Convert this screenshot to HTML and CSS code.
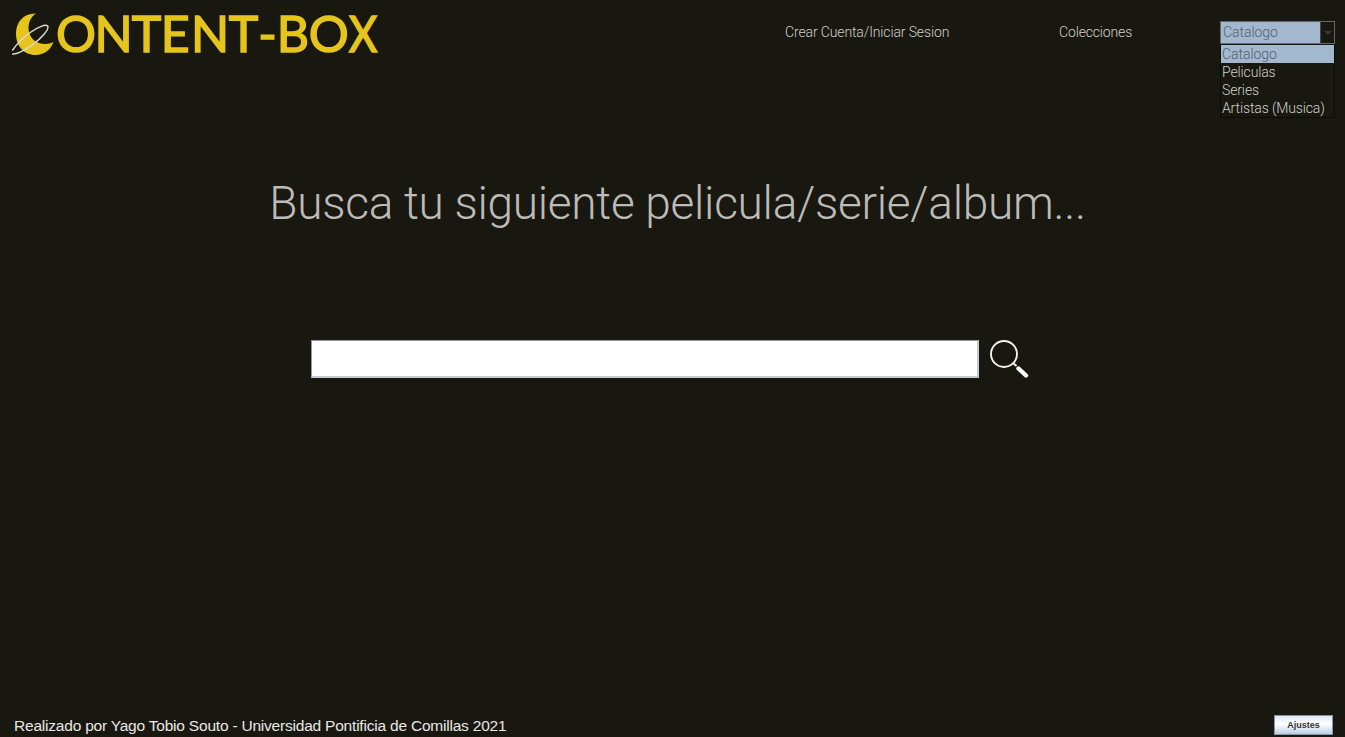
FILE: index.html
```html
<!DOCTYPE html>
<html lang="es">
<head>
<meta charset="utf-8">
<title>Content-Box</title>
<link rel="stylesheet" href="styles.css">
</head>
<body>
<div class="page">
  <header class="header">
    <svg class="logo" width="390" height="70" viewBox="0 0 390 70" role="img" aria-label="Content-Box">
      <path class="moon" d="M36 13.500C24 13 16 21.500 16 33.500C16 46 24 55 35.500 55C44 55 50.500 50 53.500 42C48 45 40 44.500 35 41C26.500 35 26 20 36 13.500Z"/>
      <path class="orbit" d="M12.300 50.500C17 43.500 24 37 31 32C38 27 45.500 24 47.700 26C49.500 29 42 38 32 45C24 51 15 55 12.300 53.700"/>
      <text class="wordmark" y="51.600" x="56 94.500 131.700 160.800 191 228.700 258.200 276.800 308.700">ONTENT-BO</text>
      <text class="wordmark" transform="translate(348.800 51.600) scale(.88 1)">X</text>
    </svg>
    <nav class="nav">
      <a class="link account">Crear Cuenta/Iniciar Sesion</a>
      <a class="link collections">Colecciones</a>
      <div class="catalog">
        <div class="combo"><span class="value">Catalogo</span><span class="arrow"></span></div>
        <ul class="options">
          <li class="option selected">Catalogo</li>
          <li class="option">Peliculas</li>
          <li class="option">Series</li>
          <li class="option">Artistas (Musica)</li>
        </ul>
      </div>
    </nav>
  </header>
  <main class="main">
    <h1 class="title">Busca tu siguiente pelicula/serie/album...</h1>
    <div class="search">
      <input class="field" type="text" aria-label="Buscar">
      <svg class="lens" width="42" height="42" viewBox="0 0 42 42">
        <circle cx="16" cy="14" r="13" fill="none" stroke="#f2f2ee" stroke-width="1.900"/>
        <path d="M25.500 23.500L28.500 26" stroke="#f2f2ee" stroke-width="2.200"/>
        <path d="M30.500 28.500L38 35.500" stroke="#fff" stroke-width="4.400" stroke-linecap="round"/>
      </svg>
    </div>
  </main>
  <footer class="footer">
    <span class="credit">Realizado por Yago Tobio Souto - Universidad Pontificia de Comillas 2021</span>
    <button class="settings">Ajustes</button>
  </footer>
</div>
</body>
</html>
```
FILE: styles.css
```css
* { box-sizing: border-box; }
body { margin: 0; background: #181710; font-family: Roboto, sans-serif; }
.page { height: 737px; display: flex; flex-direction: column; overflow: hidden; }
.header { display: flex; justify-content: space-between; height: 120px; padding-right: 10px; }
.logo { flex: none; }
.moon { fill: #e5c41c; }
.orbit { fill: none; stroke: #dcdbd0; stroke-width: 1.500; }
.wordmark { font: 400 50px Lato, sans-serif; fill: #e5c41c; stroke: #e5c41c; stroke-width: 1.500; }
.nav { display: flex; align-items: flex-start; padding-top: 21px; color: #d0d0cd; font-size: 14px; font-weight: 300; }
.link { line-height: 23px; white-space: nowrap; }
.account { width: 274px; letter-spacing: -0.130px; }
.collections { width: 161px; letter-spacing: -0.150px; }
.catalog { width: 115px; }
.combo { display: flex; height: 23px; border: 1px solid #62686b; background: #a3b8cf; color: #52606d; }
.value { flex: 1; padding-left: 2px; line-height: 21px; letter-spacing: -0.050px; }
.arrow { width: 14px; border-left: 1px solid #46494a; background: #181710; display: flex; align-items: center; justify-content: center; }
.arrow::after { content: ""; border: 4px solid transparent; border-top-color: #35383b; border-bottom: 0; }
.options { margin: 0; padding: 1px 0 0; list-style: none; border: 1px solid #0b0b08; border-top: 0; }
.option { height: 18px; padding-left: 1px; line-height: 19px; letter-spacing: -0.130px; white-space: nowrap; }
.selected { background: #a3b8cf; color: #52606d; letter-spacing: -0.050px; }
.main { flex: 1; display: flex; flex-direction: column; align-items: center; }
.title { margin: 53px 0 0 10px; height: 60px; color: #bdbbb7; font-size: 46px; line-height: 60px; font-weight: 300; letter-spacing: -0.280px; white-space: nowrap; }
.search { display: flex; gap: 9px; margin-top: 107px; align-self: flex-start; padding-left: 311px; }
.field { width: 668px; height: 38px; padding: 0 6px; border: solid; border-width: 1px 2px 2px 1px; border-color: #9298a2 #c3cbd2 #c3cbd2 #9298a2; background: #fff; outline: 0; }
.footer { display: flex; justify-content: space-between; height: 23px; padding: 0 12px 0 14px; }
.credit { color: #e8e8e6; font: 15.500px/24px "Liberation Sans", Arial, sans-serif; letter-spacing: -0.210px; white-space: nowrap; }
.settings { width: 59px; height: 20px; margin-top: 1px; padding: 0; border: 1px solid #8696a9; background: linear-gradient(#dfe8f2, #fff 45%, #b9cee4); color: #333; font: bold 9px "Liberation Sans", Arial, sans-serif; }
```
